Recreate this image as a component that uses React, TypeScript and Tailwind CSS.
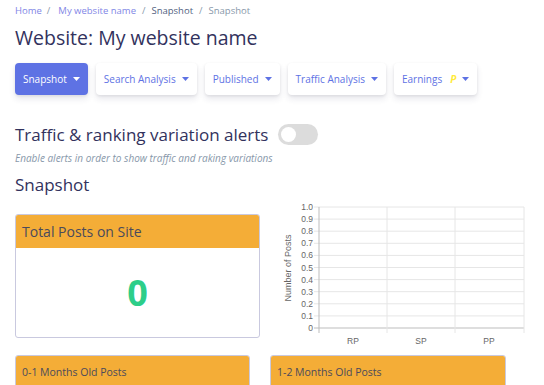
import React from "react";

const Caret = () => (
  <svg width="7" height="4" viewBox="0 0 7 4" className="ml-[6px]">
    <path d="M0 0 L7 0 L3.5 4 Z" fill="currentColor" />
  </svg>
);

function NavButton({ label, active, extra }: { label: string; active?: boolean; extra?: React.ReactNode }) {
  return (
    <div
      className={
        "h-[32px] px-[8px] rounded-[4px] flex items-center text-[10px] font-normal " +
        (active
          ? "bg-[#5e72e4] text-white shadow-[0_4px_6px_rgba(50,50,93,0.11),0_1px_3px_rgba(0,0,0,0.08)]"
          : "bg-white text-[#5e72e4] shadow-[0_4px_6px_rgba(50,50,93,0.11),0_1px_3px_rgba(0,0,0,0.08)]")
      }
    >
      <span>{label}</span>
      {extra}
      <Caret />
    </div>
  );
}

function Chart() {
  const top = 9;
  const bottom = 130;
  const left = 49;
  const right = 254;
  const ticks = [1.0, 0.9, 0.8, 0.7, 0.6, 0.5, 0.4, 0.3, 0.2, 0.1, 0];
  const step = (bottom - top) / 10;
  const vx = [49, 117, 185, 254];
  const labels = [
    { t: "RP", x: 83 },
    { t: "SP", x: 151 },
    { t: "PP", x: 219 },
  ];
  return (
    <svg width="262" height="148" viewBox="0 0 262 148" style={{ fontFamily: "'Liberation Sans', Arial, sans-serif" }}>
      {ticks.map((v, i) => {
        const y = top + i * step;
        return (
          <g key={i}>
            <line x1={left - 5} x2={right} y1={y} y2={y} stroke={i === 10 ? "#bdbdbd" : "#e6e6e6"} strokeWidth="1" />
            <text x={left - 6} y={y + 3} fontSize="8.5" fill="#666" textAnchor="end">
              {i === 10 ? "0" : v.toFixed(1)}
            </text>
          </g>
        );
      })}
      {vx.map((x, i) => (
        <line key={i} x1={x} x2={x} y1={top} y2={bottom + 5} stroke={i === 0 ? "#bdbdbd" : "#e6e6e6"} strokeWidth="1" />
      ))}
      {labels.map((l) => (
        <text key={l.t} x={l.x} y={bottom + 16} fontSize="8.5" fill="#666" textAnchor="middle">
          {l.t}
        </text>
      ))}
      <text x={0} y={0} fontSize="9" fill="#666" textAnchor="middle" transform="translate(21 70) rotate(-90)">
        Number of Posts
      </text>
    </svg>
  );
}

function Card({ title, width, titleSize, children }: { title: string; width: string; titleSize: string; children?: React.ReactNode }) {
  return (
    <div className={"border border-[#c9c9df] rounded-[3px] overflow-hidden bg-white " + width}>
      <div className={"h-[33px] bg-[#f4ad37] flex items-center px-[6px] text-[#4a4a5c] " + titleSize}>{title}</div>
      {children}
    </div>
  );
}

export default function App() {
  return (
    <div className="w-[544px] h-[385px] overflow-hidden bg-white pl-[15px]" style={{ fontFamily: "'Open Sans', 'Noto Sans', sans-serif" }}>
      <div className="pt-[3px] h-[18px] leading-[15px] text-[9.5px] flex items-center">
        <span className="text-[#7f86e6]">Home</span>
        <span className="text-[#8898aa] ml-[5px] mr-[8px]">/</span>
        <span className="text-[#7f86e6]">My website name</span>
        <span className="text-[#8898aa] mx-[6px]">/</span>
        <span className="text-[#525f7f]">Snapshot</span>
        <span className="text-[#8898aa] mx-[6px]">/</span>
        <span className="text-[#8898aa]">Snapshot</span>
      </div>
      <div className="mt-[8px] text-[19.5px] leading-[24px] text-[#32325d]">Website: My website name</div>
      <div className="mt-[13px] flex gap-[8px]">
        <NavButton label="Snapshot" active />
        <NavButton label="Search Analysis" />
        <NavButton label="Published" />
        <NavButton label="Traffic Analysis" />
        <NavButton
          label="Earnings"
          extra={<span className="ml-[8px] text-[#ffeb3b] italic font-bold text-[10px]">P</span>}
        />
      </div>
      <div className="mt-[29px] flex items-center h-[21px]">
        <span className="text-[17px] leading-[22px] text-[#32325d]">Traffic &amp; ranking variation alerts</span>
        <div className="ml-[10px] w-[40px] h-[21px] rounded-full bg-[#dcdcdc] flex items-center pl-[3px]">
          <div className="w-[15px] h-[15px] rounded-full bg-white" />
        </div>
      </div>
      <div className="mt-[6px] text-[10px] leading-[14px] italic text-[#8898aa]">
        Enable alerts in order to show traffic and raking variations
      </div>
      <div className="mt-[9px] text-[17px] leading-[22px] text-[#32325d]">Snapshot</div>
      <div className="mt-[2px] flex items-start">
        <div className="mt-[16px]">
          <Card title="Total Posts on Site" width="w-[245px]" titleSize="text-[14px]">
            <div className="h-[89px] flex items-center justify-center text-[36px] font-bold text-[#2dce89]">0</div>
          </Card>
        </div>
        <div className="ml-[10px]">
          <Chart />
        </div>
      </div>
      <div className="mt-[9px] flex gap-[20px]">
        <Card title="0-1 Months Old Posts" width="w-[235px]" titleSize="text-[10.5px]">
          <div className="h-[60px]" />
        </Card>
        <Card title="1-2 Months Old Posts" width="w-[236px]" titleSize="text-[10.5px]">
          <div className="h-[60px]" />
        </Card>
      </div>
    </div>
  );
}
